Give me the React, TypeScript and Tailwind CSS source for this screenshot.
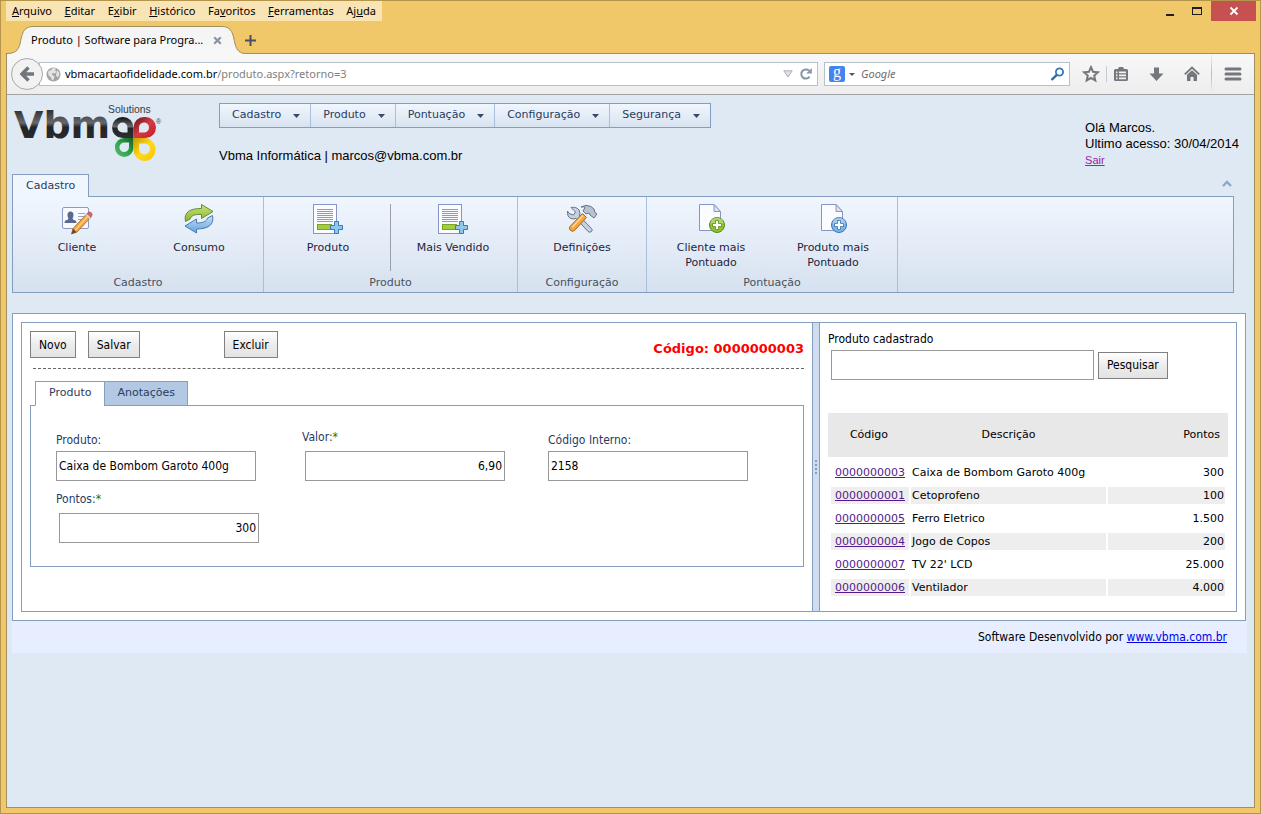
import { useState } from "react";
import type { ReactNode } from "react";

const uiFont = "font-['Noto_Sans','Open_Sans',sans-serif]";
const verdana = "font-['DejaVu_Sans',sans-serif]";
const tahoma = "font-['DejaVu_Sans_Condensed','DejaVu_Sans',sans-serif]";
const arial = "font-['Liberation_Sans',sans-serif]";

/* ---------- Browser window ---------- */

const menuItems: [string, string, string][] = [
  ["", "A", "rquivo"],
  ["", "E", "ditar"],
  ["E", "x", "ibir"],
  ["", "H", "istórico"],
  ["Fa", "v", "oritos"],
  ["", "F", "erramentas"],
  ["Aj", "u", "da"],
];

function TitleBar() {
  return (
    <div className="flex h-5 justify-between">
      <nav className="ml-[5px] flex w-[376px] items-center justify-between bg-[#f9e4b6] px-1.5 text-[11px] leading-5 text-black">
        {menuItems.map(([pre, key, post]) => (
          <button key={key + post} type="button">
            {pre}
            <span className="underline">{key}</span>
            {post}
          </button>
        ))}
      </nav>
      <div className="mr-1 flex items-stretch">
        <button type="button" aria-label="Minimizar" className="flex w-7 items-center justify-center">
          <svg width="12" height="12" viewBox="0 0 12 12">
            <rect x="3" y="9" width="8" height="2" fill="#1e1e1e" />
          </svg>
        </button>
        <button type="button" aria-label="Maximizar" className="flex w-7 items-center justify-center">
          <svg width="12" height="12" viewBox="0 0 12 12">
            <path d="M1 2h10v8H1z M2 4v5h8V4z" fill="#1e1e1e" fillRule="evenodd" />
          </svg>
        </button>
        <button type="button" aria-label="Fechar" className="flex w-[45px] items-center justify-center bg-[#c75050]">
          <svg width="10" height="10" viewBox="0 0 10 10">
            <path d="M1.5 1.5l7 7M8.5 1.5l-7 7" stroke="#fff" strokeWidth="1.8" />
          </svg>
        </button>
      </div>
    </div>
  );
}

function TabStrip() {
  return (
    <div className="relative z-10 -mb-px ml-[5px] flex items-end pt-[5px]">
      <div className="relative h-7 w-[240px]">
        <svg className="absolute inset-0" width="240" height="28" viewBox="0 0 240 28">
          <defs>
            <linearGradient id="tabFill" x1="0" y1="0" x2="0" y2="1">
              <stop offset="0" stopColor="#f4f4f4" />
              <stop offset="1" stopColor="#f7f7f8" />
            </linearGradient>
          </defs>
          <path
            d="M1 28V27.5C9 27.5 12 25 14 18C16 8 17 .5 27 .5H216C226 .5 227 8 229 18C231 25 234 27.5 240 27.5V28Z"
            fill="url(#tabFill)"
          />
          <path
            d="M0 27.5C9 27.5 12 25 14 18C16 8 17 .5 27 .5H216C226 .5 227 8 229 18C231 25 234 27.5 240 27.5"
            fill="none"
            stroke="#a08f60"
          />
        </svg>
        <div className="relative flex h-7 items-center justify-between pl-[25px] pr-6">
          <span className="whitespace-nowrap text-[11px] text-black">Produto | Software para Progra...</span>
          <button type="button" aria-label="Fechar aba">
            <svg width="9" height="9" viewBox="0 0 9 9">
              <path d="M1.2 1.2l6.600 6.600M7.800 1.200L1.200 7.800" stroke="#8b94a0" strokeWidth="2.200" />
            </svg>
          </button>
        </div>
      </div>
      <button type="button" aria-label="Nova aba" className="flex h-7 w-2.5 items-center justify-end">
        <svg className="shrink-0" width="11" height="11" viewBox="0 0 11 11">
          <path d="M5.500 0v11M0 5.500h11" stroke="#46525f" strokeWidth="2" />
        </svg>
      </button>
    </div>
  );
}

function Globe() {
  return (
    <svg width="15" height="15" viewBox="0 0 15 15">
      <circle cx="7.5" cy="7.5" r="7" fill="#a3a3a3" />
      <path
        d="M2 4.500L5 3l2-2 3 .600-1 2 1.500 1L9 6.500 6.500 6l-.500 2 2.500 1-.500 3-2 1.500L5 10.500 2.500 8.500zM11 3.500l2.400 2-.400 3.500-2 1.500-1-2.500z"
        fill="#e3e3e3"
      />
    </svg>
  );
}

function Toolbar() {
  return (
    <div className="flex h-[41px] items-center border-b border-[#a0a3a7] bg-linear-to-b from-[#f8f8f8] to-[#ededee] pl-1">
      <button
        type="button"
        aria-label="Voltar"
        className="relative flex size-8 shrink-0 items-center justify-center rounded-full border border-[#a9a9a9] bg-[#f2f2f2]"
      >
        <svg width="15" height="16" viewBox="0 0 15 16">
          <path d="M8.500 1.500L2 8l6.500 6.500M2.500 8H14" stroke="#72777e" strokeWidth="3.400" fill="none" />
        </svg>
      </button>
      <div className="-ml-1 flex h-6 min-w-0 flex-1 items-center border border-[#b5c1cd] bg-white pl-1.5 pr-1">
        <Globe />
        <a href="#url" className="ml-1 flex-1 truncate text-[11px] text-[#808080]">
          <span className="text-black">vbmacartaofidelidade.com.br</span>/produto.aspx?retorno=3
        </a>
        <svg width="10" height="8" viewBox="0 0 10 8">
          <path d="M.800.800h8.400L5 7z" fill="#dfe3e8" stroke="#a8b0b9" />
        </svg>
        <button type="button" aria-label="Recarregar" className="ml-1.5">
          <svg width="14" height="14" viewBox="0 0 14 14">
            <path d="M10.600 9.700A4.600 4.600 0 1 1 10 3.600" fill="none" stroke="#8795a5" strokeWidth="2" />
            <path d="M7.200 6.500h5.600V.900z" fill="#8795a5" />
          </svg>
        </button>
      </div>
      <div className="ml-1.5 flex h-6 w-[246px] shrink-0 items-center border border-[#b5c1cd] bg-white px-1">
        <button type="button" aria-label="Mecanismo de busca" className="flex items-center">
          <span className="flex size-4 items-center justify-center rounded-xs bg-[#4583f0] pb-1 font-['Liberation_Serif',serif] text-base leading-3 text-white">
            g
          </span>
          <svg className="ml-1" width="6" height="3" viewBox="0 0 6 3">
            <path d="M0 0h6L3 3z" fill="#555" />
          </svg>
        </button>
        <input
          type="search"
          aria-label="Google"
          placeholder="Google"
          className="ml-1.5 min-w-0 flex-1 text-[11px] italic outline-none placeholder:text-[#6e6e6e]"
        />
        <button type="button" aria-label="Pesquisar na web">
          <svg width="15" height="15" viewBox="0 0 15 15">
            <circle cx="9.500" cy="5" r="3.600" fill="none" stroke="#3477b8" strokeWidth="1.800" />
            <path d="M6.800 7.800L1.500 13" stroke="#2f66a6" strokeWidth="2.400" />
          </svg>
        </button>
      </div>
      <div className="flex shrink-0 items-center self-stretch">
        <button type="button" aria-label="Favoritar" className="ml-3">
          <svg width="18" height="18" viewBox="0 0 18 18">
            <path
              d="M9 2.200l2 4.500 4.900.500-3.700 3.300 1.100 4.900L9 12.900l-4.300 2.500 1.100-4.900L2.100 7.200 7 6.700z"
              fill="none"
              stroke="#74777c"
              strokeWidth="2"
            />
          </svg>
        </button>
        <span className="ml-1.5 h-4 w-px bg-[#c3cbd3]" />
        <button type="button" aria-label="Lista de favoritos" className="ml-1.5">
          <svg width="16" height="16" viewBox="0 0 16 16">
            <path
              d="M2.500 3H5l1-2h4l1 2h2.500q1.500 0 1.500 1.500v9q0 1.500-1.500 1.500h-11Q1 15 1 13.500v-9Q1 3 2.500 3zM3 5.500v1.800h1.500V5.500zm3 0v1.800h7V5.500zM3 8.500v1.700h1.500V8.500zm3 0v1.700h7V8.500zm-3 3v1.700h1.500v-1.700zm3 0v1.700h7v-1.700z"
              fill="#74777c"
              fillRule="evenodd"
            />
          </svg>
        </button>
        <button type="button" aria-label="Downloads" className="ml-5">
          <svg width="15" height="15" viewBox="0 0 15 15">
            <path d="M5 .500h5v6h4.500l-7 7.500L.500 6.500H5z" fill="#74777c" />
          </svg>
        </button>
        <button type="button" aria-label="Página inicial" className="ml-5">
          <svg width="16" height="16" viewBox="0 0 16 16">
            <path d="M.800 8.300L8 1.500l7.200 6.800" fill="none" stroke="#74777c" strokeWidth="1.800" />
            <path d="M3 8.800l5-4.600 5 4.600V15H9.500v-4h-3v4H3z" fill="#74777c" />
          </svg>
        </button>
        <span className="ml-[11px] h-full w-px bg-linear-to-b from-[#f0f0f0] via-[#b3bac2] to-[#f0f0f0]" />
        <button type="button" aria-label="Abrir menu" className="mx-3">
          <svg width="18" height="14" viewBox="0 0 18 14">
            <path d="M2 2h14M2 7h14M2 12h14" stroke="#74777c" strokeWidth="3" strokeLinecap="round" />
          </svg>
        </button>
      </div>
    </div>
  );
}

/* ---------- Page header ---------- */

function Logo() {
  return (
    <svg width="152" height="62" viewBox="0 0 152 62" role="img" aria-label="Vbma Solutions">
      <defs>
        <linearGradient id="ink" x1="0" y1="0" x2="0" y2="1">
          <stop offset="0" stopColor="#111" />
          <stop offset=".45" stopColor="#66696c" />
          <stop offset=".55" stopColor="#222426" />
          <stop offset="1" stopColor="#2c2f31" />
        </linearGradient>
        <linearGradient id="red" x1="0" y1="0" x2="1" y2="1">
          <stop offset="0" stopColor="#5d1216" />
          <stop offset=".5" stopColor="#d53b42" />
          <stop offset="1" stopColor="#c21b25" />
        </linearGradient>
        <linearGradient id="green" x1="1" y1="0" x2="0" y2="1">
          <stop offset="0" stopColor="#12601f" />
          <stop offset=".5" stopColor="#2da548" />
          <stop offset="1" stopColor="#5fba72" />
        </linearGradient>
        <linearGradient id="yellow" x1="0" y1="0" x2="1" y2="1">
          <stop offset="0" stopColor="#c79a00" />
          <stop offset=".5" stopColor="#ffd91c" />
          <stop offset="1" stopColor="#f5c400" />
        </linearGradient>
      </defs>
      <text x="0" y="38" fontFamily="'DejaVu Sans',sans-serif" fontWeight="700" fontSize="38" fill="url(#ink)">
        Vbm
      </text>
      <text x="94" y="13" fontFamily="'Liberation Sans',sans-serif" fontSize="10.4" fill="#3a3a3a">
        Solutions
      </text>
      <text x="142" y="24" fontFamily="'Liberation Sans',sans-serif" fontSize="7" fill="#444">
        ®
      </text>
      <g fillRule="evenodd">
        <path d="M119.500 38h-11a10.500 10.500 0 1 1 0-21h.500a10.500 10.500 0 0 1 10.500 10.500zM113.500 32.500v-5a5 5 0 1 0-5 5z" fill="url(#ink)" />
        <path d="M119.500 38V27.500A10.500 10.500 0 0 1 130 17h1.500a10.500 10.500 0 1 1 0 21zM125 32.500h5.500a5 5 0 1 0-5.500-5z" fill="url(#red)" />
        <path d="M119.500 38v9.500a9.300 9.500 0 1 1-9-9.500zM115 42.500h-4.500a4.800 4.800 0 1 0 4.500 5z" fill="url(#green)" />
        <path d="M119.500 38h11.500a11 11.500 0 1 1-11.500 11.500zM125 43.500v6a5.500 5.500 0 1 0 6-6z" fill="url(#yellow)" />
      </g>
    </svg>
  );
}

const siteMenu = ["Cadastro", "Produto", "Pontuação", "Configuração", "Segurança"];

function Header() {
  return (
    <header className="flex items-start pl-[7px] pr-[15px]">
      <div className="w-[205px] shrink-0 pt-[5px]">
        <Logo />
      </div>
      <div className="flex-1 pb-2.5 pt-2">
        <nav className={`${verdana} flex h-[25px] w-max border border-[#859ebf] bg-linear-to-b from-[#f0f6fe] to-[#d8e3f0]`}>
          {siteMenu.map((name) => (
            <button
              key={name}
              type="button"
              className="flex items-center gap-3 border-r border-[#a9bfdd] pl-3 pr-2.5 text-[11px] text-[#283b62] last:border-r-0"
            >
              {name}
              <svg width="7" height="4" viewBox="0 0 7 4">
                <path d="M0 0h7L3.500 4z" fill="#3a4a68" />
              </svg>
            </button>
          ))}
        </nav>
        <p className={`${arial} mt-5 text-[13px] leading-4 text-black`}>Vbma Informática | marcos@vbma.com.br</p>
      </div>
      <div className={`${arial} pt-[25px] text-[13px] leading-4 text-black`}>
        <p>Olá Marcos.</p>
        <p>Ultimo acesso: 30/04/2014</p>
        <a href="#sair" className="block text-[11px] leading-4 text-[#a020a0] underline">
          Sair
        </a>
      </div>
    </header>
  );
}

/* ---------- Ribbon icons ---------- */

function ClientIcon() {
  return (
    <svg width="32" height="32" viewBox="0 0 32 32">
      <rect x="1.500" y="4.500" width="26" height="21" rx="1.500" fill="#f7faff" stroke="#8b9bc9" />
      <path d="M9.500 8.500q3 0 3 3.500 0 2-1 3.500.200 1.300 3 2 1 .500 1 2.500H3.500q0-2 1-2.500 2.800-.700 3-2-1-1.500-1-3.500 0-3.500 3-3.500z" fill="#5a6992" />
      <path d="M17 10.500h7M17 13.500h6M17 16.500h4" stroke="#9aa8cf" />
      <path d="M10.500 31l1.500-5.500L26 10.500l4 3.700-14 14.800z" fill="#f2a33c" stroke="#a66a25" strokeWidth=".8" />
      <path d="M14 27.500L27.500 12.500" stroke="#ffd38a" strokeWidth="1.300" />
      <path d="M26 10.500l1-1q1.800-1.300 3.400.300 1.500 1.600.300 3.300l-.700 1z" fill="#e2615b" stroke="#a94444" strokeWidth=".6" />
      <path d="M24.500 12.200l4 3.700 1.200-1.300-4-3.700z" fill="#cbd3e6" />
      <path d="M12 25.500l-1.500 5.500 5.200-1.800z" fill="#6a4a3c" />
    </svg>
  );
}

function RefreshIcon() {
  return (
    <svg width="32" height="32" viewBox="0 0 32 32">
      <defs>
        <linearGradient id="arrowGreen" x1="0" y1="0" x2="0" y2="1">
          <stop offset="0" stopColor="#c9e37c" />
          <stop offset="1" stopColor="#8ab52b" />
        </linearGradient>
        <linearGradient id="arrowBlue" x1="0" y1="0" x2="0" y2="1">
          <stop offset="0" stopColor="#c5e0f6" />
          <stop offset="1" stopColor="#62a3dc" />
        </linearGradient>
      </defs>
      <path d="M2.500 18.500C.500 9 7 5.500 18.500 5.500V1.500l11.500 7-11.500 7V11.500C11 11 8 13 7 16z" fill="url(#arrowGreen)" stroke="#66893a" />
      <path d="M29.500 12.500C31.500 22 25 26 13.500 26V30L2 23 13.500 16v4C20 20 23.500 18.500 24.500 15z" fill="url(#arrowBlue)" stroke="#4d79b5" />
    </svg>
  );
}

function SheetPlusIcon() {
  return (
    <svg width="32" height="32" viewBox="0 0 32 32">
      <rect x="1.500" y="1.500" width="23" height="29" fill="#fbfcff" stroke="#8794c4" />
      <path d="M5 6.500h16M5 8.500h16M5 10.500h16M5 12.500h16M5 14.500h16M5 16.500h16M5 18.500h16" stroke="#8e99c0" />
      <rect x="5.500" y="21.500" width="14" height="5" fill="#a2cd41" stroke="#7ba325" />
      <path d="M22.500 18.500h4v4h4v4h-4v4h-4v-4h-4v-4h4z" fill="#8ec6ec" stroke="#3d78b5" />
    </svg>
  );
}

function ToolsIcon() {
  return (
    <svg width="32" height="32" viewBox="0 0 32 32">
      <path
        d="M5 4.500L9.500 9 7.500 12 3 10.500 1.500 8Q1 14 5 15.500q3 1 5-.200L22 28.500q2 1.500 3.500 0t0-3L13.500 13q1.200-3-.500-6Q10.500 3.500 5 4.500z"
        fill="#c6cfdd"
        stroke="#67738a"
      />
      <path d="M15 4q5-3 10-.500 4 2 4 6l2 1.500-3 4-4-3-1-2-3 1-3-3 2-3.500q-1-1-4-.500z" fill="#b7c1d0" stroke="#67738a" />
      <path d="M16.500 10.500l4 4L8.500 27.500q-2 1.500-4 0t-.500-4z" fill="#f2a43e" stroke="#a96a20" />
      <path d="M17 12.500L6 24.500" stroke="#ffd692" strokeWidth="1.600" />
    </svg>
  );
}

function PagePlusIcon({ tone }: { tone: "green" | "blue" }) {
  const fill = tone === "green" ? "#8fc22d" : "#7bb5e6";
  const edge = tone === "green" ? "#5a8a1e" : "#3a74b4";
  return (
    <svg width="32" height="32" viewBox="0 0 32 32">
      <path d="M4.500 1.500h14.500l6.500 7v19h-21z" fill="#fbfcff" stroke="#8794c4" />
      <path d="M19 1.500v7h6.500z" fill="#dde4f5" stroke="#8794c4" />
      <circle cx="22" cy="22" r="7.500" fill={fill} stroke={edge} />
      <path d="M15.500 20.500a6.500 6 0 0 1 13 0q-6 3-13 0z" fill="#fff" opacity=".3" />
      <path d="M20.500 17.500h3v3h3v3h-3v3h-3v-3h-3v-3h3z" fill="#fff" stroke={edge} strokeWidth=".8" />
    </svg>
  );
}

/* ---------- Ribbon ---------- */

function RibbonItem({ icon, label }: { icon: ReactNode; label: string }) {
  return (
    <button type="button" className="flex w-[120px] flex-col items-center gap-[5px] px-3 text-[11px] leading-[15px] text-[#1e1e3c]">
      {icon}
      <span>{label}</span>
    </button>
  );
}

function RibbonGroup({ title, children }: { title: string; children: ReactNode }) {
  return (
    <section className="flex min-h-[95px] flex-col justify-between border-r border-[#a9bfdd] px-1 pb-0.5 pt-1.5">
      <div className="flex items-start justify-center gap-0.5">{children}</div>
      <h2 className="text-center text-[11px] leading-[15px] text-[#46505f]">{title}</h2>
    </section>
  );
}

function Ribbon() {
  return (
    <div className={`${verdana} ml-[5px] mr-5`}>
      <div className="flex items-start justify-between">
        <button
          type="button"
          className="relative z-10 -mb-px h-[23px] border border-b-0 border-[#859ebf] bg-[#f0f6fe] px-[13px] text-[11px] text-[#283b62]"
        >
          Cadastro
        </button>
        <button type="button" aria-label="Recolher" className="mr-0.5 mt-1.5">
          <svg width="10" height="7" viewBox="0 0 10 7">
            <path d="M1 6l4-4 4 4" fill="none" stroke="#8fa5c9" strokeWidth="2.400" />
          </svg>
        </button>
      </div>
      <div className="flex border border-[#859ebf] bg-linear-to-b from-[#f0f6fe] to-[#d6e1ef]">
        <RibbonGroup title="Cadastro">
          <RibbonItem icon={<ClientIcon />} label="Cliente" />
          <RibbonItem icon={<RefreshIcon />} label="Consumo" />
        </RibbonGroup>
        <RibbonGroup title="Produto">
          <RibbonItem icon={<SheetPlusIcon />} label="Produto" />
          <span className="mt-px h-[67px] w-px bg-[#9a9fab]" />
          <RibbonItem icon={<SheetPlusIcon />} label="Mais Vendido" />
        </RibbonGroup>
        <RibbonGroup title="Configuração">
          <RibbonItem icon={<ToolsIcon />} label="Definições" />
        </RibbonGroup>
        <RibbonGroup title="Pontuação">
          <RibbonItem icon={<PagePlusIcon tone="green" />} label="Cliente mais Pontuado" />
          <RibbonItem icon={<PagePlusIcon tone="blue" />} label="Produto mais Pontuado" />
        </RibbonGroup>
      </div>
    </div>
  );
}

/* ---------- Product form ---------- */

function ActionButton({ children }: { children: ReactNode }) {
  return (
    <button
      type="button"
      className="h-[27px] border border-[#808080] bg-linear-to-b from-white via-[#ececec] to-[#e3e3e3] px-2 text-xs text-black"
    >
      {children}
    </button>
  );
}

interface FieldProps {
  id: string;
  label: string;
  initial: string;
  required?: boolean;
}

function Field({ id, label, initial, required = false }: FieldProps) {
  const [value, setValue] = useState(initial);
  return (
    <div className={required ? "flex flex-col gap-1.5" : "flex flex-col gap-[3px]"}>
      <label htmlFor={id} className="text-xs leading-4 text-[#283b62]">
        {label}:{required && <span className="text-[#008000]">*</span>}
      </label>
      <input
        id={id}
        value={value}
        onChange={(e) => setValue(e.target.value)}
        className={
          required
            ? "ml-[3px] h-[30px] w-[200px] border border-[#999] bg-white px-0.5 text-right text-xs text-black"
            : "h-[30px] w-[200px] border border-[#999] bg-white px-0.5 text-xs text-black"
        }
      />
    </div>
  );
}

function ProductForm() {
  return (
    <section className="min-w-0 flex-1 px-2 pb-[44px] pt-2">
      <div className="flex items-center">
        <div className="flex gap-3">
          <ActionButton>Novo</ActionButton>
          <ActionButton>Salvar</ActionButton>
        </div>
        <div className="ml-[84px] flex-1">
          <ActionButton>Excluir</ActionButton>
        </div>
        <strong className={`${verdana} pt-2 text-[13px] leading-[19px] text-[#f00]`}>Código: 0000000003</strong>
      </div>
      <hr className="ml-[3px] mt-2.5 border-t border-dashed border-[#666]" />
      <div role="tablist" className={`${verdana} relative z-10 -mb-px ml-[5px] mt-3 flex h-[25px] text-[11px] text-[#283b62]`}>
        <button role="tab" type="button" aria-selected="true" className="border border-r-0 border-[#859ebf] border-b-white bg-white px-[13px]">
          Produto
        </button>
        <button role="tab" type="button" aria-selected="false" className="border border-[#859ebf] bg-[#b3c9e3] px-3">
          Anotações
        </button>
      </div>
      <div className="grid grid-cols-[repeat(3,246px)] items-end gap-y-2.5 border border-[#859ebf] px-[25px] py-[23px]">
        <Field id="produto" label="Produto" initial="Caixa de Bombom Garoto 400g" />
        <Field id="valor" label="Valor" initial="6,90" required />
        <Field id="interno" label="Código Interno" initial="2158" />
        <Field id="pontos" label="Pontos" initial="300" required />
      </div>
    </section>
  );
}

/* ---------- Product search ---------- */

const products: [string, string, string][] = [
  ["0000000003", "Caixa de Bombom Garoto 400g", "300"],
  ["0000000001", "Cetoprofeno", "100"],
  ["0000000005", "Ferro Eletrico", "1.500"],
  ["0000000004", "Jogo de Copos", "200"],
  ["0000000007", "TV 22' LCD", "25.000"],
  ["0000000006", "Ventilador", "4.000"],
];

function ProductSearch() {
  return (
    <section className="w-[416px] shrink-0 px-2 pt-2">
      <label htmlFor="busca" className="block text-xs leading-4 text-black">
        Produto cadastrado
      </label>
      <div className="ml-[3px] mt-[3px] flex items-center gap-1">
        <input id="busca" className="h-[30px] w-[263px] border border-[#999] bg-white px-0.5 text-xs" />
        <ActionButton>Pesquisar</ActionButton>
      </div>
      <table className={`${verdana} mt-[33px] w-full table-fixed border-separate border-spacing-0 text-[11px] text-black`}>
        <thead>
          <tr className="h-[48px]">
            <th className="w-[82px] border-b-4 border-white bg-[#e8e8e8] font-normal">Código</th>
            <th className="border-b-4 border-white bg-[#e8e8e8] font-normal">Descrição</th>
            <th className="w-[121px] border-b-4 border-white bg-[#e8e8e8] pr-2 text-right font-normal">Pontos</th>
          </tr>
        </thead>
        <tbody>
          {products.map(([code, name, points]) => (
            <tr key={code} className="h-[23px] even:bg-[#eee]">
              <td className="border-y-3 border-l-3 border-r border-white pl-1 pt-px leading-4">
                <a href={`#${code}`} className="text-[#551a8b] underline">
                  {code}
                </a>
              </td>
              <td className="border-x border-y-3 border-white pl-px pt-px leading-4">{name}</td>
              <td className="border-y-3 border-l border-r-3 border-white pr-px pt-px text-right leading-4">{points}</td>
            </tr>
          ))}
        </tbody>
      </table>
    </section>
  );
}

function Splitter() {
  return (
    <div className="flex w-2 shrink-0 flex-col items-center justify-center gap-0.5 border-x border-[#859ebf] bg-[#cfdcf0]">
      {[0, 1, 2, 3].map((n) => (
        <span key={n} className="size-0.5 bg-[#859ebf]" />
      ))}
    </div>
  );
}

export default function App() {
  return (
    <div className={`${uiFont} flex min-h-screen flex-col border border-[#b5954b] bg-[#f0c869]`}>
      <TitleBar />
      <TabStrip />
      <div className="mx-[5px] mb-[5px] flex flex-1 flex-col border border-[#a08f60] bg-[#dfe9f3]">
        <Toolbar />
        <Header />
        <Ribbon />
        <main className={`${tahoma} ml-[5px] mr-2 mt-5 border border-[#859ebf] bg-white p-2`}>
          <div className="flex border border-[#859ebf]">
            <ProductForm />
            <Splitter />
            <ProductSearch />
          </div>
        </main>
        <footer className={`${tahoma} ml-[5px] mr-[7px] bg-[#e6eeff] px-5 py-2 text-right text-xs leading-4 text-black`}>
          Software Desenvolvido por{" "}
          <a href="#vbma" className="text-[#0000ee] underline">
            www.vbma.com.br
          </a>
        </footer>
      </div>
    </div>
  );
}
